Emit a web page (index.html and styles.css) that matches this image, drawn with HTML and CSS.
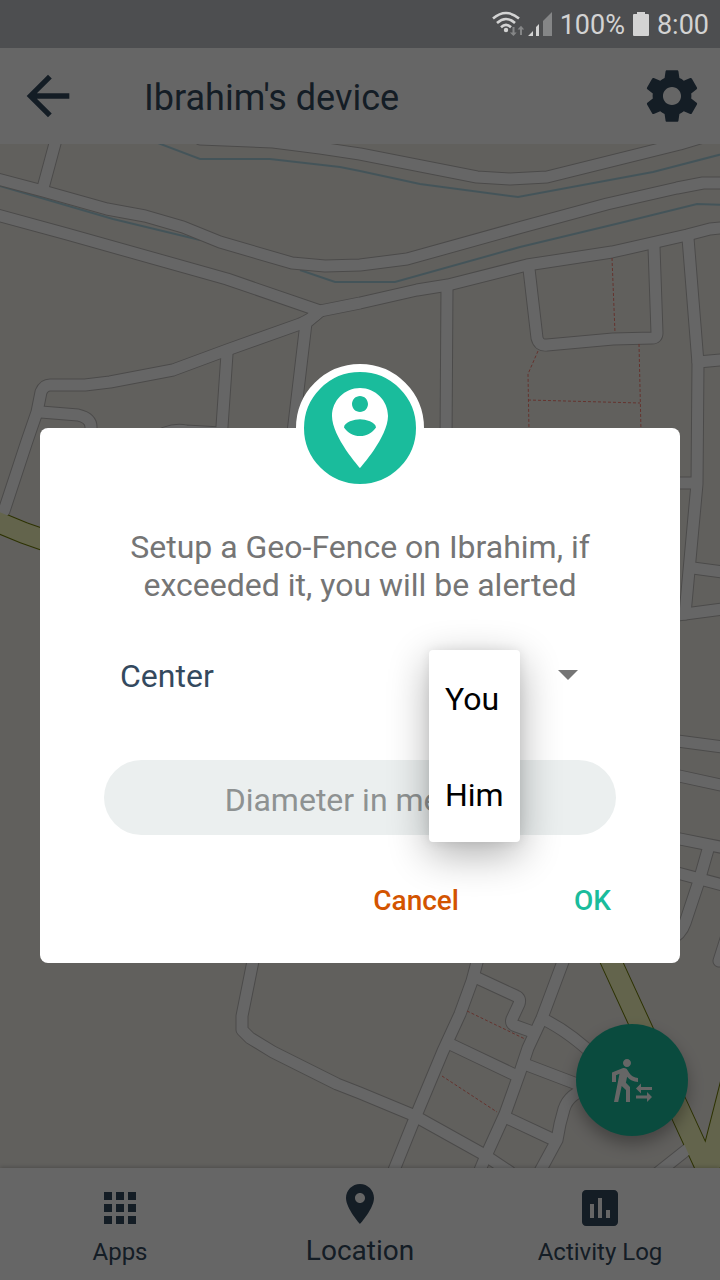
FILE: index.html
```html
<!DOCTYPE html>
<html lang="en">
<head>
<meta charset="utf-8">
<meta name="viewport" content="width=device-width, initial-scale=1">
<title>Ibrahim's device</title>
<link rel="stylesheet" href="styles.css">
</head>
<body>
<div class="app">
  <div class="status">
    <svg class="status-wifi" viewBox="0 0 32 26" aria-hidden="true">
      <g fill="none" stroke="#d3d3d3" stroke-width="2.6">
        <path d="M1 7.5Q14 -3.5 27 7.5"/>
        <path d="M5 12Q14 4 23 12"/>
        <path d="M9 16.200Q14 11.600 19 16.200"/>
      </g>
      <circle cx="14" cy="19" r="2.200" fill="#d3d3d3"/>
      <path fill="#858687" d="M20.500 16h2v5.500h2.200L21.500 25l-3.700-3.500h2.700zM28 24h2v-5.500h2.200L29 14.800l-3.500 3.700H28z"/>
    </svg>
    <svg class="status-signal" viewBox="0 0 24 24" aria-hidden="true">
      <path fill="#d3d3d3" d="M0 24l5-5v5zM8 15l3-3v12H8z"/>
      <path fill="#858687" d="M15 9l9-9v24h-9z"/>
    </svg>
    <span>100%</span>
    <svg class="status-battery" viewBox="0 0 16 24" aria-hidden="true">
      <path fill="#d3d3d3" d="M4 0h8v2h3q1 0 1 1v20q0 1-1 1H1q-1 0-1-1V3q0-1 1-1h3z"/>
    </svg>
    <span>8:00</span>
  </div>

  <header class="toolbar">
    <button class="icon-button" type="button" aria-label="Back">
      <svg class="icon-back" viewBox="0 0 24 24"><path d="M20 11H7.830l5.590-5.590L12 4l-8 8 8 8 1.410-1.410L7.830 13H20v-2z"/></svg>
    </button>
    <h1 class="title">Ibrahim's device</h1>
    <button class="icon-button" type="button" aria-label="Settings">
      <svg class="icon-gear" viewBox="0 0 24 24"><path d="M19.430 12.980c.04-.32.07-.64.07-.98s-.03-.66-.07-.98l2.110-1.650c.19-.15.24-.42.12-.64l-2-3.460c-.12-.22-.39-.3-.61-.22l-2.490 1c-.52-.4-1.080-.73-1.690-.98l-.38-2.650C14.460 2.180 14.250 2 14 2h-4c-.25 0-.46.18-.49.42l-.38 2.650c-.61.25-1.170.59-1.690.98l-2.490-1c-.23-.09-.49 0-.61.22l-2 3.460c-.13.22-.07.49.12.64l2.110 1.650c-.04.32-.07.65-.07.98s.03.66.07.98l-2.110 1.650c-.19.15-.24.42-.12.64l2 3.460c.12.22.39.3.61.22l2.490-1c.52.4 1.080.73 1.690.98l.38 2.650c.03.24.24.42.49.42h4c.25 0 .46-.18.49-.42l.38-2.650c.61-.25 1.170-.59 1.690-.98l2.490 1c.23.09.49 0 .61-.22l2-3.460c.12-.22.07-.49-.12-.64l-2.110-1.650zM12 15.500c-1.930 0-3.500-1.570-3.500-3.500s1.570-3.500 3.500-3.500 3.500 1.570 3.500 3.500-1.570 3.500-3.500 3.500z"/></svg>
    </button>
  </header>

  <main class="map">
    <svg class="map-canvas" viewBox="0 143 720 1024" preserveAspectRatio="xMidYMid slice" role="img" aria-label="Street map">
      <defs>
        <g id="roads" fill="none" stroke-linejoin="round" stroke-linecap="round">
          <path d="M-10 176L43 190L107 208L145 215L183 226L220 241L292 262L325 265L360 264L407 258L522 226L607 203L677 187L703 182L730 182"/>
          <path d="M57 135L43 187"/>
          <path d="M-10 212L67 233L227 278L320 310L360 302L417 289L448 284L527 264L612 251L687 234L710 228L730 226"/>
          <path d="M320 310Q312 318 300 323L227 349L173 369L110 381L85 384L50 384Q44 384 41 391L37 411L27 440L4 510"/>
          <path d="M41 411L78 414Q91 417 91 426V440"/>
          <path d="M227 353L221 440"/>
          <path d="M320 310L306 322L292 440"/>
          <path d="M150 440L165 432Q176 428 186 430L221 432"/>
          <path d="M200 138L273 141L320 147L360 153L477 176L510 178L547 176L680 143L710 134"/>
          <path d="M447 286L446 440"/>
          <path d="M529 268L537 337Q539 345 547 344L613 338L652 337Q657 337 657 332L654 246"/>
          <path d="M688 237L698 362L697 483L685 613"/>
          <path d="M698 361L730 358M670 482H696M693 567L730 572M670 615L685 613L730 607"/>
          <path d="M670 739L730 747M670 773L730 786M670 836L730 848M670 870L730 886"/>
          <path d="M709 845L699 880L685 922Q681 934 670 938M730 925L719 960"/>
          <path d="M256 945L242 1015V1029L250 1037L273 1051L337 1083L360 1092L413 1114L483 1153L510 1171"/>
          <path d="M480 950L472 980L460 1013L443 1050L415 1117L392 1174"/>
          <path d="M475 976L516 995Q521 997 519 1003L512 1018Q510 1023 516 1025L530 1030"/>
          <path d="M567 950L542 1017L528 1047L520 1071L505 1113L485 1157L478 1174"/>
          <path d="M450 1043L513 1073M543 1018Q570 1031 600 1060M527 1064L590 1088M505 1116L552 1138M590 1087Q569 1092 564 1108L560 1123L557 1139L538 1174"/>
          <path d="M655 1174L694 1143"/>
        </g>
        <g id="highways" fill="none" stroke-linejoin="miter">
          <path d="M-10 518L0 522L24 532L50 541"/>
          <path d="M604 945L678 1106L712 1180M706 1180L735 1066"/>
        </g>
      </defs>
      <g class="water">
        <path d="M150 139L200 158H270L340 166L360 170L420 183L518 196L653 171L730 151"/>
        <path d="M0 185L113 218L200 239M300 269L335 281H395L520 246L620 222L697 203L730 204"/>
      </g>
      <use href="#roads" class="road-casing"/>
      <use href="#highways" class="highway-casing"/>
      <use href="#roads" class="road-fill"/>
      <use href="#highways" class="highway-fill"/>
      <g class="footways">
        <path d="M612 257L615 332M538 350L528 373L529 430M639 343L641 430M528 399L640 402"/>
        <path d="M467 1010L525 1038M442 1075L497 1111"/>
      </g>
    </svg>
    <button class="fab" type="button" aria-label="Set up geo-fence">
      <svg class="icon" viewBox="0 0 24 24"><path d="M16.490 15.500v-1.750L14 16.250l2.490 2.500V17H22v-1.500zm3.020 4.250H14v1.500h5.510V23L22 20.500 19.510 18zM9.500 5.500c1.100 0 2-.9 2-2s-.9-2-2-2-2 .9-2 2 .9 2 2 2zM5.750 8.900L3 23h2.100l1.750-8L9 17v6h2v-7.550L8.950 13.400l.6-3C10.850 12 12.800 13 15 13v-2c-1.850 0-3.450-1-4.350-2.450l-.95-1.600C9.350 6.350 8.700 6 8 6c-.25 0-.5.05-.75.15L2 8.300V13h2V9.650l1.750-.75"/></svg>
    </button>
  </main>

  <nav class="tabs">
    <a class="tab" href="#apps">
      <svg class="icon" viewBox="0 0 24 24"><path d="M4 8h4V4H4v4zm6 12h4v-4h-4v4zm-6 0h4v-4H4v4zm0-6h4v-4H4v4zm6 0h4v-4h-4v4zm6-10v4h4V4h-4zm-6 4h4V4h-4v4zm6 6h4v-4h-4v4zm0 6h4v-4h-4v4z"/></svg>
      <span>Apps</span>
    </a>
    <a class="tab tab-active" href="#location" aria-current="page">
      <svg class="icon" viewBox="0 0 24 24"><path d="M12 2C8.130 2 5 5.130 5 9c0 5.250 7 13 7 13s7-7.750 7-13c0-3.870-3.130-7-7-7zm0 9.500c-1.380 0-2.500-1.120-2.500-2.500s1.120-2.500 2.500-2.500 2.500 1.120 2.500 2.500-1.120 2.500-2.500 2.500z"/></svg>
      <span>Location</span>
    </a>
    <a class="tab" href="#activity">
      <svg class="icon" viewBox="0 0 24 24"><path d="M19 3H5c-1.100 0-2 .9-2 2v14c0 1.100.9 2 2 2h14c1.100 0 2-.9 2-2V5c0-1.100-.9-2-2-2zM9 17H7v-7h2v7zm4 0h-2V7h2v10zm4 0h-2v-4h2v4z"/></svg>
      <span>Activity Log</span>
    </a>
  </nav>
</div>

<div class="scrim">
  <form class="dialog" role="dialog" aria-modal="true" aria-labelledby="message">
    <div class="badge">
      <svg viewBox="0 0 24 24" aria-hidden="true"><path d="M12 2C8.140 2 5 5.140 5 9c0 5.250 7 13 7 13s7-7.750 7-13c0-3.860-3.140-7-7-7zm0 2c1.100 0 2 .9 2 2 0 1.110-.9 2-2 2s-2-.89-2-2c0-1.100.9-2 2-2zm0 10c-1.670 0-3.140-.85-4-2.150.02-1.320 2.670-2.050 4-2.050s3.980.73 4 2.050c-.86 1.300-2.330 2.150-4 2.150z"/></svg>
    </div>
    <p class="message" id="message">Setup a Geo-Fence on Ibrahim, if exceeded it, you will be alerted</p>
    <div class="field">
      <label for="center">Center</label>
      <div class="spinner">
        <select id="center">
          <option>You</option>
          <option>Him</option>
        </select>
        <div class="menu" role="listbox" aria-label="Center">
          <button type="button" role="option" aria-selected="true">You</button>
          <button type="button" role="option" aria-selected="false">Him</button>
        </div>
      </div>
    </div>
    <input class="diameter" type="text" inputmode="numeric" placeholder="Diameter in meters" aria-label="Diameter in meters">
    <div class="actions">
      <button class="action cancel" type="button">Cancel</button>
      <button class="action ok" type="submit">OK</button>
    </div>
  </form>
</div>
</body>
</html>
```

FILE: styles.css
```css
* {
  box-sizing: border-box;
}

body {
  margin: 0;
  font-family: Roboto, "Noto Sans", sans-serif;
  color: #34495e;
}

button,
input,
select {
  margin: 0;
  padding: 0;
  border: 0;
  background: none;
  color: inherit;
  font: inherit;
}

svg {
  display: block;
  fill: currentColor;
}

.app {
  display: flex;
  flex-direction: column;
  min-height: 100vh;
}

/* Status bar */
.status {
  position: relative;
  z-index: 2;
  display: flex;
  align-items: center;
  justify-content: flex-end;
  gap: 8px;
  height: 48px;
  padding-right: 11px;
  background: #4d4e50;
  color: #d3d3d3;
  font-size: 27px;
  line-height: 32px;
}

.status span {
  padding-top: 2px;
}

.status-wifi {
  width: 32px;
  height: 26px;
}

.status-signal {
  width: 24px;
  height: 24px;
  margin-left: -4px;
}

.status-battery {
  width: 16px;
  height: 24px;
}

/* Toolbar */
.toolbar {
  display: flex;
  align-items: center;
  height: 96px;
  padding: 0 16px;
  background: #fff;
}

.icon-button {
  display: grid;
  place-items: center;
  width: 64px;
  height: 64px;
}

.icon-back {
  width: 64px;
  height: 64px;
}

.icon-gear {
  width: 62px;
  height: 62px;
}

.title {
  flex: 1;
  margin: 0;
  padding: 4px 0 0 64px;
  font-size: 36px;
  font-weight: 400;
  line-height: 44px;
}

/* Map */
.map {
  position: relative;
  display: grid;
  flex: 1;
  min-height: 320px;
  background: #f2efe9;
}

.map-canvas {
  position: absolute;
  inset: 0;
  width: 100%;
  height: 100%;
}

.water {
  fill: none;
  stroke: #aad3df;
  stroke-width: 2;
}

.road-casing {
  stroke: #bcbab8;
  stroke-width: 13;
}

.road-fill {
  stroke: #fff;
  stroke-width: 11;
}

.highway-casing {
  stroke: #707d05;
  stroke-width: 22;
}

.highway-fill {
  stroke: #f7fabf;
  stroke-width: 20;
}

.footways {
  fill: none;
  stroke: #fa8072;
  stroke-width: 1;
  stroke-dasharray: 3 2;
}

.fab {
  position: absolute;
  right: 32px;
  bottom: 32px;
  display: grid;
  place-items: center;
  width: 112px;
  height: 112px;
  border-radius: 50%;
  background: #1abc9c;
  box-shadow: 0 8px 16px rgba(0, 0, 0, 0.3);
  color: #fff;
}

.icon {
  width: 48px;
  height: 48px;
}

/* Bottom tabs */
.tabs {
  position: relative;
  display: grid;
  grid-template-columns: repeat(3, 1fr);
  height: 112px;
  background: #fff;
  box-shadow: 0 -1px 4px rgba(0, 0, 0, 0.2);
}

.tab {
  display: flex;
  flex-direction: column;
  align-items: center;
  gap: 4px;
  padding-top: 16px;
  color: inherit;
  font-size: 24px;
  line-height: 32px;
  text-decoration: none;
}

.tab-active {
  gap: 7px;
  padding-top: 12px;
  font-size: 28px;
}

/* Dialog */
.scrim {
  position: fixed;
  inset: 0;
  z-index: 1;
  display: grid;
  align-items: center;
  padding: 48px 40px 1px;
  background: rgba(0, 0, 0, 0.6);
}

.dialog {
  position: relative;
  margin-top: 64px;
  padding: 100px 64px 26px;
  border-radius: 8px;
  background: #fff;
  font-size: 32px;
  line-height: 38px;
}

.badge {
  position: absolute;
  top: -64px;
  left: 50%;
  display: grid;
  place-items: center;
  width: 128px;
  height: 128px;
  margin-left: -64px;
  border: 8px solid #fff;
  border-radius: 50%;
  background: #1abc9c;
  color: #fff;
}

.badge svg {
  width: 96px;
  height: 96px;
}

.message {
  margin: 0;
  color: #757575;
  text-align: center;
}

.field {
  display: flex;
  align-items: center;
  justify-content: space-between;
  height: 72px;
  margin: 36px 22px 48px 16px;
}

.spinner {
  position: relative;
  width: 165px;
}

.spinner::after {
  content: "";
  position: absolute;
  top: 50%;
  right: 16px;
  width: 20px;
  height: 10px;
  margin-top: -6px;
  background: #757575;
  clip-path: polygon(0 0, 100% 0, 50% 100%);
  pointer-events: none;
}

.spinner select {
  width: 100%;
  height: 48px;
  padding-left: 16px;
  appearance: none;
}

.menu {
  position: absolute;
  top: -2px;
  left: 0;
  display: grid;
  border-radius: 4px;
  background: #fff;
  box-shadow: 0 12px 40px rgba(0, 0, 0, 0.32), 0 0 12px rgba(0, 0, 0, 0.08);
  color: #000;
}

.menu button {
  height: 96px;
  padding: 2px 16px 0;
  text-align: left;
}

.diameter {
  display: block;
  width: 100%;
  height: 75px;
  padding: 4px 32px 0;
  border-radius: 38px;
  background: #ebefef;
  text-align: center;
}

.diameter::placeholder {
  color: #8e9292;
  opacity: 1;
}

.actions {
  display: flex;
  justify-content: flex-end;
  gap: 87px;
  margin-top: 30px;
}

.action {
  height: 72px;
  font-size: 28px;
  font-weight: 500;
}

.cancel {
  color: #d35400;
}

.ok {
  min-width: 70px;
  padding-right: 5px;
  color: #1abc9c;
  text-align: right;
}
```
